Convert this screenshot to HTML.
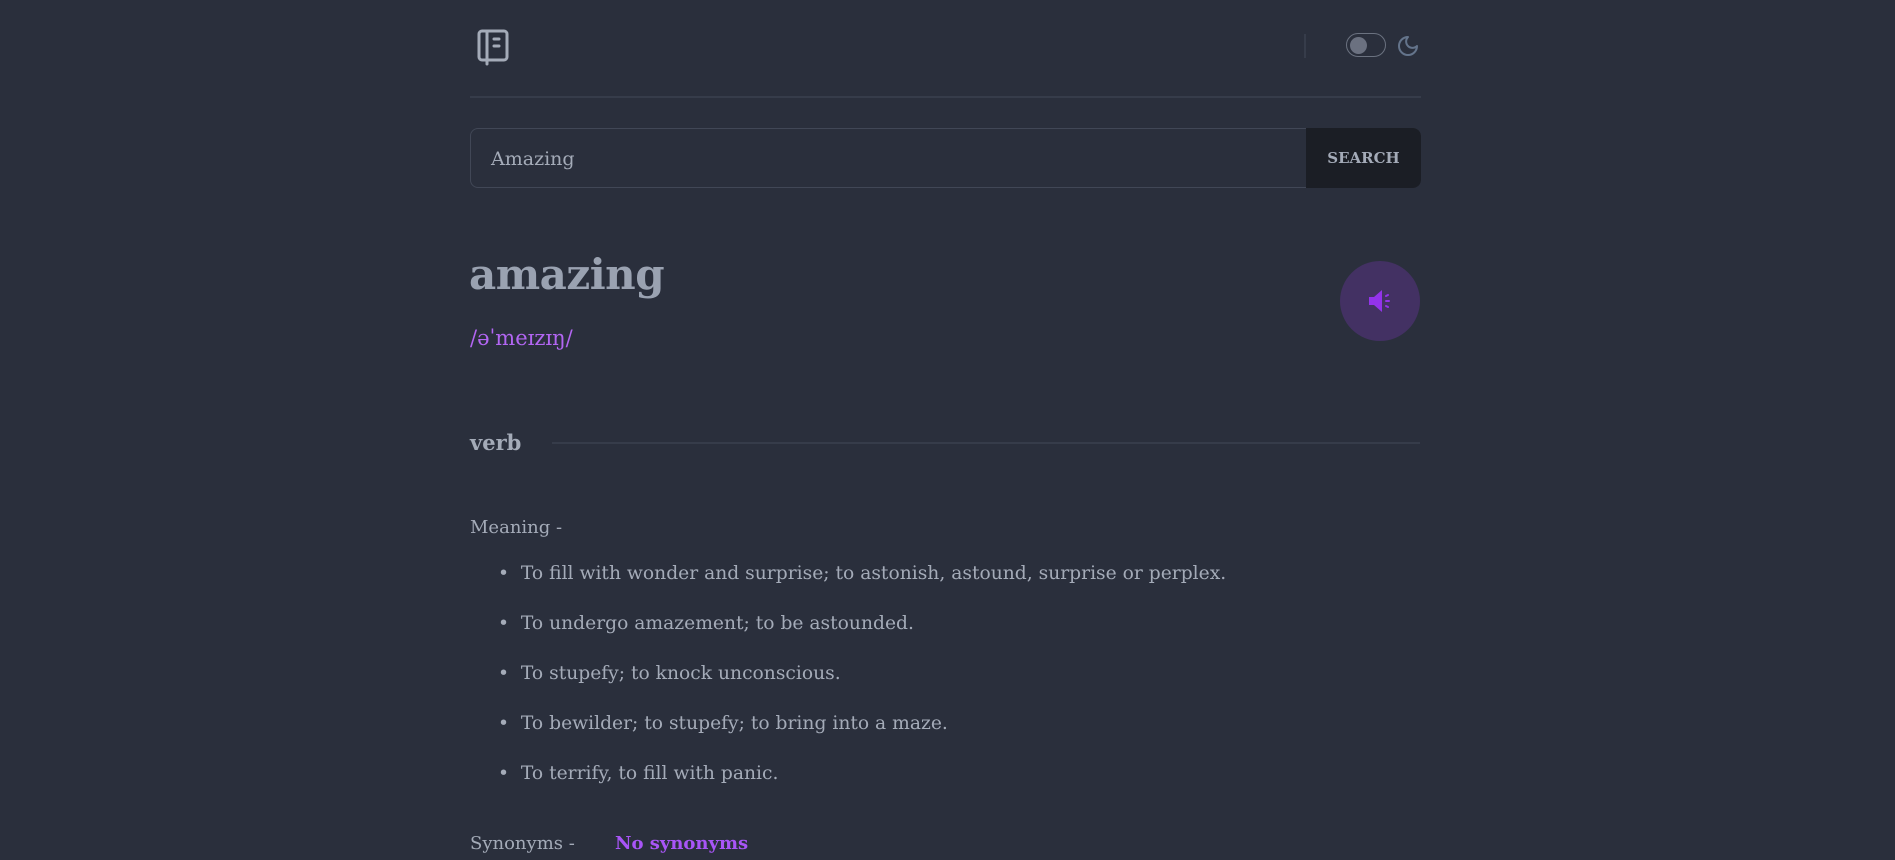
<!DOCTYPE html>
<html><head><meta charset="utf-8"><style>
html,body{margin:0;padding:0;width:1895px;height:860px;overflow:hidden;background:#2a2f3c;font-family:"DejaVu Serif","Liberation Serif",serif;color:#a4abb8}
.a{position:absolute;white-space:nowrap}
</style></head><body>
<svg class="a" style="left:476px;top:28px" width="34" height="38" viewBox="0 0 34 38" fill="none" stroke="#a4abb8" stroke-width="3" stroke-linejoin="round" stroke-linecap="round">
<rect x="3" y="3" width="28" height="29" rx="3"/>
<line x1="11" y1="3" x2="11" y2="36"/>
<line x1="18" y1="11" x2="23" y2="11"/>
<line x1="18" y1="18" x2="23" y2="18"/>
</svg>
<div class="a" style="left:1304px;top:34px;width:2px;height:24px;background:#363c4a"></div>
<div class="a" style="left:1346px;top:33px;width:38px;height:22px;border:1.5px solid #6b7280;border-radius:13px"></div>
<div class="a" style="left:1350px;top:37px;width:17px;height:17px;border-radius:50%;background:#6b7180"></div>
<svg class="a" style="left:1396px;top:34px" width="24" height="24" viewBox="0 0 24 24" fill="none" stroke="#64748b" stroke-width="2" stroke-linejoin="round"><path d="M12 3a6 6 0 0 0 9 9 9 9 0 1 1-9-9Z"/></svg>
<div class="a" style="left:470px;top:96px;width:951px;height:2px;background:#363c4a"></div>
<div class="a" style="left:470px;top:128px;width:949px;height:58px;border:1px solid #414756;border-radius:8px;background:#2a2f3c"></div>
<div class="a" style="left:1306px;top:128px;width:115px;height:60px;background:#1b1e25;border-radius:0 8px 8px 0"></div>
<div class="a" style="left:1306px;top:149px;width:115px;text-align:center;font-size:15px;font-weight:bold;color:#a4abb8">SEARCH</div>
<div class="a" style="left:491px;top:148px;font-size:19px;color:#a4abb8">Amazing</div>
<div class="a" style="left:469px;top:250px;font-size:42px;font-weight:bold;color:#9aa2b1;letter-spacing:-0.5px">amazing</div>
<div class="a" style="left:470px;top:326px;font-size:21px;color:#b266f2">/əˈmeɪzɪŋ/</div>
<div class="a" style="left:1340px;top:261px;width:80px;height:80px;border-radius:50%;background:#433163"></div>
<svg class="a" style="left:1366px;top:287px" width="28" height="28" viewBox="0 0 28 28"><path d="M3 10h5l8-7v22l-8-7H3z" fill="#9333ea"/><g stroke="#9333ea" stroke-width="2" stroke-linecap="round"><line x1="20" y1="9" x2="22" y2="8"/><line x1="20" y1="14" x2="23" y2="14"/><line x1="20" y1="19" x2="22" y2="20"/></g></svg>
<div class="a" style="left:470px;top:430px;font-size:21px;font-weight:bold;color:#a4abb8">verb</div>
<div class="a" style="left:552px;top:442px;width:868px;height:2px;background:#363c4a"></div>
<div class="a" style="left:470px;top:517px;font-size:18px">Meaning -</div>
<div class="a" style="left:498px;top:549px;font-size:18.7px;line-height:50px">
<div>•&nbsp; To fill with wonder and surprise; to astonish, astound, surprise or perplex.</div>
<div>•&nbsp; To undergo amazement; to be astounded.</div>
<div>•&nbsp; To stupefy; to knock unconscious.</div>
<div>•&nbsp; To bewilder; to stupefy; to bring into a maze.</div>
<div>•&nbsp; To terrify, to fill with panic.</div>
</div>
<div class="a" style="left:470px;top:833px;font-size:18px">Synonyms -</div>
<div class="a" style="left:615px;top:833px;font-size:18px;font-weight:bold;color:#a855f7">No synonyms</div>
</body></html>
